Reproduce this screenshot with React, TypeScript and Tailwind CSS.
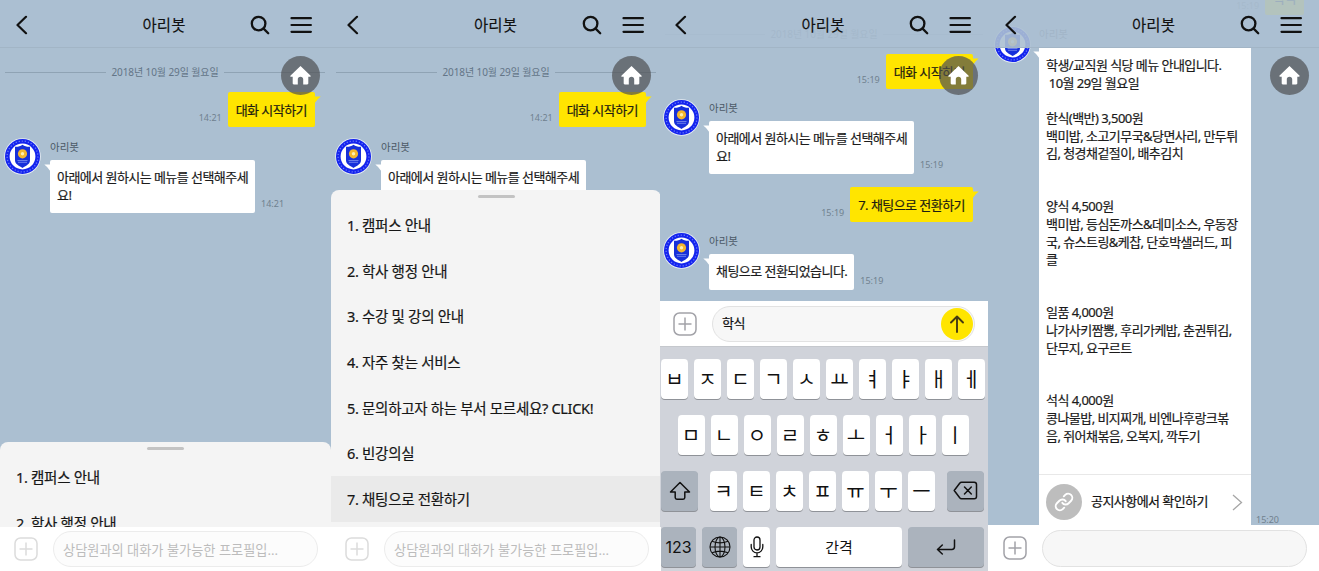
import type { ReactNode } from "react";

function BackIcon() {
  return (
    <svg width="12" height="20" viewBox="0 0 12 20" fill="none" stroke="#111" strokeWidth="2.2" strokeLinecap="round" strokeLinejoin="round">
      <path d="M10 1.800 1.500 10l8.500 8.200" />
    </svg>
  );
}

function SearchIcon() {
  return (
    <svg width="20" height="20" viewBox="0 0 20 20" fill="none" stroke="#111" strokeWidth="2.3" strokeLinecap="round">
      <circle cx="8.600" cy="8.600" r="6.800" />
      <path d="m13.600 13.600 4.600 4.600" />
    </svg>
  );
}

function MenuIcon() {
  return (
    <svg width="22" height="18" viewBox="0 0 22 18" fill="none" stroke="#111" strokeWidth="2.2" strokeLinecap="round">
      <path d="M1.500 2.200h19.400M1.500 9h19.400M1.500 15.800h19.400" />
    </svg>
  );
}

function Header({ pad }: { pad: string }) {
  return (
    <header className={`relative z-10 grid h-12 shrink-0 grid-cols-[1fr_auto_1fr] items-center border-b border-[#a2b5c6] bg-[#abbfd1]/90 pt-0.5 ${pad}`}>
      <BackIcon />
      <h1 className="text-[15.500px] leading-5 text-[#111] [-webkit-text-stroke:0.150px]">아리봇</h1>
      <div className="flex items-center justify-end gap-5">
        <SearchIcon />
        <MenuIcon />
      </div>
    </header>
  );
}

function HomeButton({ place }: { place: string }) {
  return (
    <div className={`absolute top-14 z-20 flex size-[39px] items-center justify-center rounded-full bg-[#4f5052]/70 ${place}`}>
      <svg width="21" height="19" viewBox="0 0 21 19" fill="#fff">
        <path d="M10.500 0 .6 9.400c-.6.7-.3 1.300.6 1.300h1.500v6.600c0 .7.4 1.100 1.100 1.100h4V13.300c0-1.500 1-2.500 2.700-2.500s2.700 1 2.700 2.500v5.100h4c.7 0 1.100-.4 1.100-1.100v-6.600h1.500c.9 0 1.200-.6.6-1.300z" />
      </svg>
    </div>
  );
}

function Avatar() {
  return (
    <svg className="shrink-0" width="37" height="37" viewBox="0 0 37 37">
      <circle cx="18.500" cy="18.500" r="18.300" fill="#e7edf5" />
      <circle cx="18.500" cy="18.500" r="15.200" fill="#fff" stroke="#1424ee" strokeWidth="4.600" />
      <circle cx="18.500" cy="18.500" r="15.400" fill="none" stroke="#6b79f8" strokeWidth="1.300" strokeDasharray="1.200 1.900" />
      <path d="M11 8.800c3 .2 5.200-.5 7.500-2 2.300 1.500 4.500 2.200 7.500 2v13.500c0 3.600-3.500 5.400-7.500 7.700-4-2.300-7.500-4.100-7.500-7.700z" fill="#1730da" />
      <circle cx="18.500" cy="15.800" r="4.600" fill="#f5b72c" />
      <circle cx="18.500" cy="15.800" r="1.700" fill="#fff0b0" />
      <path d="M13.500 22.500h10M14 24.300h9" stroke="#8090ef" strokeWidth=".8" />
    </svg>
  );
}

function DateLine() {
  return (
    <div className="flex h-4 items-center gap-[5px] px-[5px] text-[10px] leading-4 text-[#637587]">
      <span className="h-px flex-1 bg-[#8fa3b4]" />
      <span className="tracking-[-0.100px]">2018년 10월 29일 월요일</span>
      <span className="h-px flex-1 bg-[#8fa3b4]" />
    </div>
  );
}

function Time({ children, className = "" }: { children: ReactNode; className?: string }) {
  return <span className={`text-[9px] leading-[18px] text-[#70818f] ${className}`}>{children}</span>;
}

function Sent({ time, children, className = "" }: { time: string; children: ReactNode; className?: string }) {
  return (
    <div className={`flex items-end justify-end gap-[6px] ${className}`}>
      <Time>{time}</Time>
      <div className="relative h-[35px] rounded-[2px] bg-[#ffe500] px-2 text-[13px] leading-[37px] tracking-[-0.550px] whitespace-nowrap text-[#1e1d10] [-webkit-text-stroke:0.200px]">
        {children}
        <svg className="absolute top-1 -right-[6px]" width="8" height="8" viewBox="0 0 8 8" fill="#ffe500">
          <path d="M0 .6h7.700Q4.500 3 2.200 6.500L0 8z" />
        </svg>
      </div>
    </div>
  );
}

function Tail() {
  return (
    <svg className="absolute top-1 -left-[6px]" width="8" height="8" viewBox="0 0 8 8" fill="#fff">
      <path d="M8 .6H.3Q3.500 3 5.800 6.500L8 8z" />
    </svg>
  );
}

function Received({ time, children, className = "" }: { time: string; children: ReactNode; className?: string }) {
  return (
    <div className={`flex gap-[9px] ${className}`}>
      <Avatar />
      <div>
        <div className="h-[22px] text-[10.500px] leading-[18px] text-[#4c5966]">아리봇</div>
        <div className="flex items-end gap-[6px]">
          <div className="relative rounded-[2px] bg-white px-[7px] py-[9px] text-[13px] leading-[17.700px] tracking-[-0.550px] whitespace-nowrap text-[#1b1b1b] [-webkit-text-stroke:0.200px]">
            {children}
            <Tail />
          </div>
          <Time>{time}</Time>
        </div>
      </div>
    </div>
  );
}

function PlusBox() {
  return (
    <svg className="shrink-0" width="24" height="24" viewBox="0 0 24 24" fill="none" stroke="currentColor" strokeWidth="1.500">
      <rect x="1" y="1" width="22" height="22" rx="5.500" />
      <path d="M12 5.500v13M5.500 12h13" />
    </svg>
  );
}

function DisabledInput() {
  return (
    <footer className="relative z-10 flex h-11 shrink-0 items-center gap-[15px] bg-white pl-3.5 text-[#dcdcdc]">
      <PlusBox />
      <div className="h-9 w-[265px] rounded-full border border-[#ececec] bg-[#fcfcfc] pl-[9px] text-[13.200px] leading-[36px] whitespace-nowrap text-[#bcbcbc]">
        상담원과의 대화가 불가능한 프로필입...
      </div>
    </footer>
  );
}

const menu = [
  "1. 캠퍼스 안내",
  "2. 학사 행정 안내",
  "3. 수강 및 강의 안내",
  "4. 자주 찾는 서비스",
  "5. 문의하고자 하는 부서 모르세요? CLICK!",
  "6. 빈강의실",
  "7. 채팅으로 전환하기",
];

function Sheet({ items, top, selected }: { items: string[]; top: string; selected?: number }) {
  return (
    <div className={`absolute inset-x-0 bottom-0 overflow-hidden rounded-t-[8px] bg-[#f4f4f4] ${top}`}>
      <div className="mx-auto mt-[5px] h-[3px] w-[37px] rounded-full bg-[#c3c3c3]" />
      <ul className="mt-1">
        {items.map((item, i) => (
          <li key={item} className={`h-[45.700px] pl-[16px] text-[14.500px] leading-[47px] tracking-[-0.300px] whitespace-nowrap text-[#161616] [-webkit-text-stroke:0.200px] ${i === selected ? "bg-[#eaeaea]" : ""}`}>
            {item}
          </li>
        ))}
      </ul>
    </div>
  );
}

function WelcomeChat() {
  return (
    <div className="w-[330px] pt-4">
      <DateLine />
      <Sent time="14:21" className="mt-3 pr-[15px]">대화 시작하기</Sent>
      <Received time="14:21" className="mt-[11px] pl-1">
        아래에서 원하시는 메뉴를 선택해주세
        <br />
        요!
      </Received>
    </div>
  );
}

function MenuPhone({ count, top, width, pad, selected }: { count: number; top: string; width: string; pad: string; selected?: number }) {
  return (
    <section className={`relative flex shrink-0 flex-col overflow-hidden bg-[#abbfd1] ${width}`}>
      <Header pad={pad} />
      <main className="relative flex-1 overflow-hidden">
        <WelcomeChat />
        <Sheet items={menu.slice(0, count)} top={top} selected={selected} />
      </main>
      <DisabledInput />
      <HomeButton place="left-[281px]" />
    </section>
  );
}

function Key({ children, className = "w-[27px] bg-white" }: { children: ReactNode; className?: string }) {
  return (
    <div className={`flex h-[39.500px] shrink-0 items-center justify-center rounded-[4px] font-['Noto_Sans_CJK_KR',sans-serif] text-[20px] leading-none text-[#111] shadow-[0_1px_0_#8f9298] ${className}`}>
      {children}
    </div>
  );
}

function Keyboard() {
  return (
    <div className="flex flex-1 flex-col gap-[16.500px] bg-[#d0d3da] pt-3 pl-[1px]">
      <div className="flex gap-[6px]">
        {[..."ㅂㅈㄷㄱㅅㅛㅕㅑㅐㅔ"].map((k) => <Key key={k}>{k}</Key>)}
      </div>
      <div className="flex gap-[6px] pl-[16.500px]">
        {[..."ㅁㄴㅇㄹㅎㅗㅓㅏㅣ"].map((k) => <Key key={k}>{k}</Key>)}
      </div>
      <div className="flex gap-[6px]">
        <Key className="mr-[6px] w-[37px] bg-[#abb3bd]">
          <svg width="22" height="20" viewBox="0 0 22 20" fill="none" stroke="#111" strokeWidth="1.500" strokeLinejoin="round">
            <path d="M11 1.500 1.500 11h4.700v5.500c0 1 .6 1.700 1.700 1.700h6.200c1.100 0 1.700-.7 1.700-1.700V11h4.700z" />
          </svg>
        </Key>
        {[..."ㅋㅌㅊㅍㅠㅜㅡ"].map((k) => <Key key={k}>{k}</Key>)}
        <Key className="ml-[6px] w-[37px] bg-[#abb3bd]">
          <svg width="25" height="19" viewBox="0 0 25 19" fill="none" stroke="#111" strokeWidth="1.500" strokeLinejoin="round" strokeLinecap="round">
            <path d="M8.500 1.200h12.700q2.300 0 2.300 2.300v12q0 2.300-2.300 2.300H8.500q-1 0-1.800-1L1.200 9.500l5.500-7.300q.8-1 1.800-1zM11.500 6l6.800 7M18.300 6l-6.800 7" />
          </svg>
        </Key>
      </div>
      <div className="flex gap-[6px]">
        <Key className="w-[35px] bg-[#abb3bd]">
          <span className="font-['Inter','Liberation_Sans',sans-serif] text-[16px]">123</span>
        </Key>
        <Key className="w-[35px] bg-[#abb3bd]">
          <svg width="22" height="22" viewBox="0 0 22 22" fill="none" stroke="#111" strokeWidth="1.100">
            <circle cx="11" cy="11" r="10" />
            <ellipse cx="11" cy="11" rx="5" ry="10" />
            <path d="M11 1v20M1 11h20M3 5.200q8 3.300 16 0M3 16.800q8-3.300 16 0" />
          </svg>
        </Key>
        <Key>
          <svg width="14" height="22" viewBox="0 0 14 22" fill="none" stroke="#111" strokeWidth="1.300" strokeLinecap="round">
            <rect x="4" y="1" width="6" height="13" rx="3" />
            <path d="M1.200 8.500V11a5.800 5.800 0 0 0 11.600 0V8.500M7 17v3.500M4 20.700h6" />
          </svg>
        </Key>
        <Key className="w-[126px] bg-white">
          <span className="text-[15px]">간격</span>
        </Key>
        <Key className="w-[76px] bg-[#abb3bd]">
          <svg width="20" height="16" viewBox="0 0 20 16" fill="none" stroke="#111" strokeWidth="1.500" strokeLinecap="round" strokeLinejoin="round">
            <path d="M18.500 1v6.800q0 2.700-2.700 2.700H1.500M6.300 6 1.500 10.500 6.300 15" />
          </svg>
        </Key>
      </div>
    </div>
  );
}

function TypingPhone() {
  return (
    <section className="relative -ml-px flex w-[328px] shrink-0 flex-col overflow-hidden bg-[#abbfd1]">
      <Header pad="pl-[15px] pr-[17px]" />
      <main className="-mt-12 h-[301px] shrink-0 overflow-hidden pt-[26px]">
        <DateLine />
        <Sent time="15:19" className="mt-3 pr-[15px]">대화 시작하기</Sent>
        <Received time="15:19" className="mt-[10px] pl-[3px]">
          아래에서 원하시는 메뉴를 선택해주세
          <br />
          요!
        </Received>
        <Sent time="15:19" className="mt-[13px] pr-[15px]">7. 채팅으로 전환하기</Sent>
        <Received time="15:19" className="mt-[10px] pl-[3px]">채팅으로 전환되었습니다.</Received>
      </main>
      <div className="flex h-[46px] shrink-0 items-center gap-[15px] border-b border-[#c5c8cd] bg-white pr-[13px] pl-[13px] text-[#a2a2a8]">
        <PlusBox />
        <div className="flex h-9 flex-1 items-center justify-between rounded-full border border-[#e2e2e2] bg-[#f7f7f7] pr-[1px] pl-[9px]">
          <span className="text-[13px] tracking-[-0.500px] text-[#111] [-webkit-text-stroke:0.200px]">학식</span>
          <span className="flex size-8 items-center justify-center rounded-full bg-[#ffe500]">
            <svg width="14" height="18" viewBox="0 0 14 18" fill="none" stroke="#453a12" strokeWidth="1.900" strokeLinecap="round" strokeLinejoin="round">
              <path d="M7 17V1.500M1 7.500l6-6 6 6" />
            </svg>
          </span>
        </div>
      </div>
      <Keyboard />
      <HomeButton place="left-[278.500px]" />
    </section>
  );
}

const meals = [
  "학생/교직원 식당 메뉴 안내입니다.",
  " 10월 29일 월요일",
  "",
  "한식(백반) 3,500원",
  "백미밥, 소고기무국&당면사리, 만두튀",
  "김, 청경채겉절이, 배추김치",
  "",
  "",
  "양식 4,500원",
  "백미밥, 등심돈까스&데미소스, 우동장",
  "국, 슈스트링&케찹, 단호박샐러드, 피",
  "클",
  "",
  "",
  "일품 4,000원",
  "나가사키짬뽕, 후리가케밥, 춘권튀김,",
  "단무지, 요구르트",
  "",
  "",
  "석식 4,000원",
  "콩나물밥, 비지찌개, 비엔나후랑크볶",
  "음, 쥐어채볶음, 오복지, 깍두기",
];

function MealPhone() {
  return (
    <section className="relative flex w-[331px] shrink-0 flex-col overflow-hidden bg-[#abbfd1]">
      <Header pad="pl-[17px] pr-[17px]" />
      <main className="-mt-12 h-[525px] shrink-0 overflow-hidden">
        <Sent time="15:19" className="-mt-5 pr-[15px]">학식</Sent>
        <div className="mt-[11px] flex gap-[8px] pl-[6px]">
          <Avatar />
          <div>
            <div className="h-[21px] text-[10.500px] leading-[17px] text-[#4c5966]">아리봇</div>
            <div className="flex items-end gap-[5px]">
              <div className="relative h-[478px] w-[212px] bg-white">
                <div className="h-[428px] border-b border-[#e8e8e8] px-[7px] pt-[10px] text-[13px] leading-[17.670px] tracking-[-0.550px] whitespace-pre text-[#1b1b1b] [-webkit-text-stroke:0.200px]">
                  {meals.map((line, i) => (
                    <p key={i} className="h-[17.670px]">{line}</p>
                  ))}
                </div>
                <div className="flex h-[54px] items-center pl-[7px]">
                  <span className="flex size-9 items-center justify-center rounded-full bg-[#bdbdbd]">
                    <svg width="20" height="20" viewBox="0 0 24 24" fill="none" stroke="#fff" strokeWidth="2.300" strokeLinecap="round">
                      <path d="M10 13a5 5 0 0 0 7.540.540l3-3a5 5 0 0 0-7.070-7.070l-1.720 1.710" />
                      <path d="M14 11a5 5 0 0 0-7.540-.540l-3 3a5 5 0 0 0 7.070 7.070l1.710-1.710" />
                    </svg>
                  </span>
                  <span className="ml-[9px] text-[13px] tracking-[-0.550px] text-[#111] [-webkit-text-stroke:0.200px]">공지사항에서 확인하기</span>
                  <svg className="mr-2 ml-auto" width="11" height="17" viewBox="0 0 11 17" fill="none" stroke="#a6a6a6" strokeWidth="1.300">
                    <path d="m1 1 8.500 7.500L1 16" />
                  </svg>
                </div>
                <Tail />
              </div>
              <Time className="-mb-1">15:20</Time>
            </div>
          </div>
        </div>
      </main>
      <footer className="flex flex-1 items-center gap-[15px] bg-white pr-3 pl-[15px] text-[#a2a2a8]">
        <PlusBox />
        <div className="h-[37px] flex-1 rounded-full border border-[#e2e2e2] bg-[#f7f7f7]" />
      </footer>
      <HomeButton place="left-[281.500px]" />
    </section>
  );
}

export default function App() {
  return (
    <div className="flex h-[571px] w-[1319px] overflow-hidden bg-white font-['Noto_Sans','Noto_Sans_CJK_KR',sans-serif]">
      <MenuPhone count={2} top="top-[394px]" width="w-[331px]" pad="pl-4 pr-[19px]" />
      <MenuPhone count={7} top="top-[142px]" width="w-[330px]" pad="pl-4 pr-[17px]" selected={6} />
      <TypingPhone />
      <MealPhone />
    </div>
  );
}
